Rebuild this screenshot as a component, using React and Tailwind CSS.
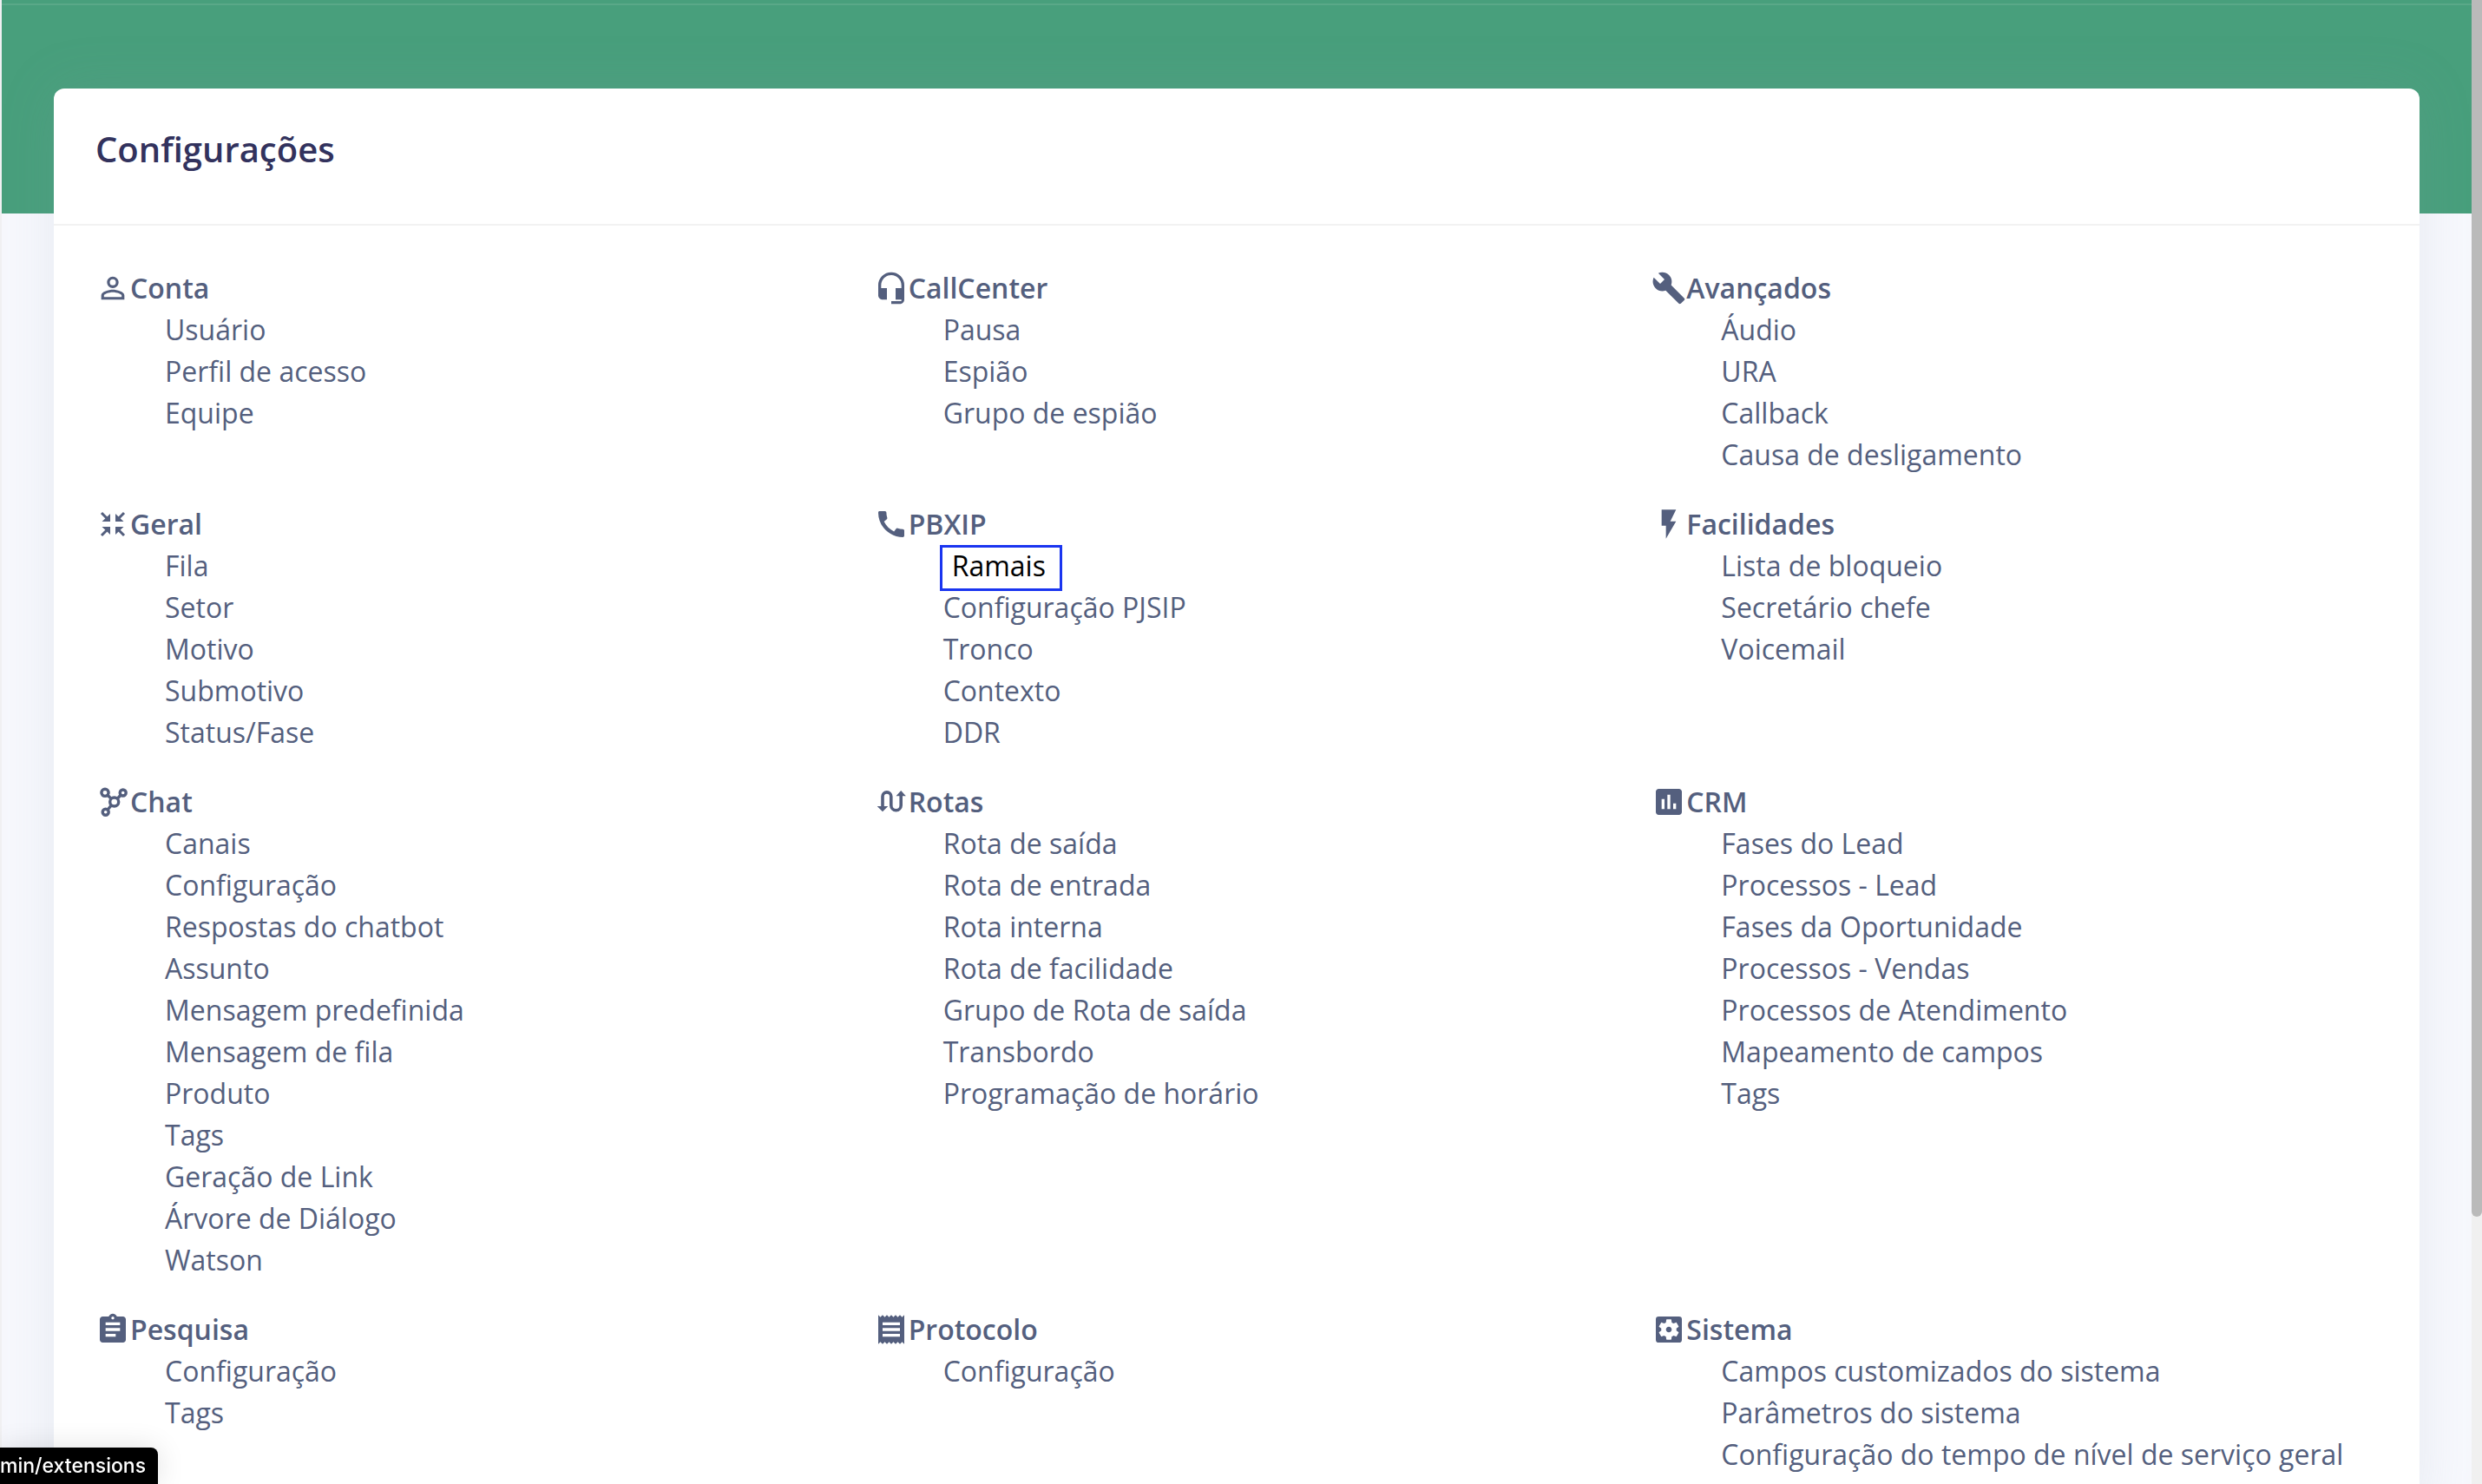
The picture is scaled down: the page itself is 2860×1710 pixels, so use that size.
import React from "react";
import {
  MdPersonOutline,
  MdHeadsetMic,
  MdBuild,
  MdCall,
  MdFlashOn,
  MdAssessment,
  MdAssignment,
  MdReceipt,
  MdSettingsApplications,
} from "react-icons/md";

function ContractIcon({ className }) {
  return (
    <svg viewBox="0 0 40 40" className={className} fill="currentColor" stroke="currentColor" aria-hidden="true">
      <g strokeWidth="3">
        <path d="M7 7l7 7M33 7l-7 7M7 33l7-7M33 33l-7-7" />
      </g>
      <g stroke="none">
        <path d="M17 8v9H7.500zM23 8v9h9.500zM17 32v-9H7.500zM23 32v-9h9.500z" />
      </g>
    </svg>
  );
}

function NodesIcon({ className }) {
  return (
    <svg viewBox="0 0 40 40" className={className} fill="none" stroke="currentColor" strokeWidth="3.400" aria-hidden="true">
      <circle cx="11" cy="9.300" r="4.100" />
      <circle cx="31.700" cy="9.500" r="3.500" />
      <circle cx="21.700" cy="20" r="5" />
      <circle cx="11.700" cy="31.700" r="3.500" />
      <path d="M14 12.200l4.200 4.200M29.200 12l-4 4.400M18.400 23.800l-4.400 5.200" />
    </svg>
  );
}

function RoutesIcon({ className }) {
  return (
    <svg viewBox="0 0 40 40" className={className} fill="none" stroke="currentColor" strokeWidth="3.600" aria-hidden="true">
      <path d="M10 26V13.800a4.900 4.900 0 0 1 9.800 0V24a5.700 5.700 0 0 0 11.400 0V12.500" />
      <path d="M3.700 25h12.600L10 31.300zM25.500 13.300h11.400L31.200 7z" fill="currentColor" stroke="none" />
    </svg>
  );
}

const sections = [
  { title: "Conta", Icon: MdPersonOutline, items: ["Usuário", "Perfil de acesso", "Equipe"] },
  { title: "CallCenter", Icon: MdHeadsetMic, items: ["Pausa", "Espião", "Grupo de espião"] },
  { title: "Avançados", Icon: MdBuild, items: ["Áudio", "URA", "Callback", "Causa de desligamento"] },
  { title: "Geral", Icon: ContractIcon, items: ["Fila", "Setor", "Motivo", "Submotivo", "Status/Fase"] },
  {
    title: "PBXIP",
    Icon: MdCall,
    items: ["Ramais", "Configuração PJSIP", "Tronco", "Contexto", "DDR"],
    active: "Ramais",
  },
  { title: "Facilidades", Icon: MdFlashOn, items: ["Lista de bloqueio", "Secretário chefe", "Voicemail"] },
  {
    title: "Chat",
    Icon: NodesIcon,
    items: [
      "Canais",
      "Configuração",
      "Respostas do chatbot",
      "Assunto",
      "Mensagem predefinida",
      "Mensagem de fila",
      "Produto",
      "Tags",
      "Geração de Link",
      "Árvore de Diálogo",
      "Watson",
    ],
  },
  {
    title: "Rotas",
    Icon: RoutesIcon,
    items: [
      "Rota de saída",
      "Rota de entrada",
      "Rota interna",
      "Rota de facilidade",
      "Grupo de Rota de saída",
      "Transbordo",
      "Programação de horário",
    ],
  },
  {
    title: "CRM",
    Icon: MdAssessment,
    items: [
      "Fases do Lead",
      "Processos - Lead",
      "Fases da Oportunidade",
      "Processos - Vendas",
      "Processos de Atendimento",
      "Mapeamento de campos",
      "Tags",
    ],
  },
  { title: "Pesquisa", Icon: MdAssignment, items: ["Configuração", "Tags"] },
  { title: "Protocolo", Icon: MdReceipt, items: ["Configuração"] },
  {
    title: "Sistema",
    Icon: MdSettingsApplications,
    items: [
      "Campos customizados do sistema",
      "Parâmetros do sistema",
      "Configuração do tempo de nível de serviço geral",
    ],
  },
];

function Section({ title, Icon, items, active }) {
  return (
    <section className="px-[30px]">
      <h2 className="flex h-12 items-center font-semibold">
        <Icon className="size-10 shrink-0" />
        {title}
      </h2>
      <ul className="pl-20">
        {items.map((item) => (
          <li key={item} className="flex">
            {item === active ? (
              <a
                href="#"
                className="-mb-[5px] -ml-1 border-3 border-[#1a35f0] pr-4 pb-[5px] pl-[11px] leading-[42px] text-black"
              >
                {item}
              </a>
            ) : (
              <a href="#">{item}</a>
            )}
          </li>
        ))}
      </ul>
    </section>
  );
}

export default function App() {
  return (
    <div className="flex h-screen overflow-hidden bg-[#f7f8fd] font-['Open_Sans',sans-serif] text-[32px] leading-[48px] text-[#545f7e]">
      <main className="flex min-w-0 flex-1 flex-col border-l-2 border-[#f0f0f2]">
        <div className="h-[246px] shrink-0 bg-[#489f7c] pt-1">
          <div className="h-0.5 bg-[#5aa888]" />
        </div>
        <div className="-mt-36 mr-[60px] ml-[60px] flex-1 rounded-t-xl bg-white shadow-[0_0_64px_rgba(136,152,170,0.15)]">
          <header className="border-b-2 border-[#f2f2f2] px-12 pt-10 pb-14">
            <h1 className="text-[40px] leading-[60px] font-semibold text-[#32325d]">Configurações</h1>
          </header>
          <div className="grid grid-cols-3 gap-y-8 px-[18px] py-12">
            {sections.map((section) => (
              <Section key={section.title} {...section} />
            ))}
          </div>
        </div>
      </main>
      <div className="w-3 shrink-0 bg-[#f0f0f0]">
        <div className="h-[82%] rounded-b-full bg-[#bababa]" />
      </div>
      <div className="fixed bottom-0 left-0 rounded-tr-lg bg-black pr-3.5 font-['Inter',sans-serif] text-[23px] leading-[42px] font-medium text-white shadow-[0_0_32px_rgba(0,0,0,0.12)]">
        min/extensions
      </div>
    </div>
  );
}
